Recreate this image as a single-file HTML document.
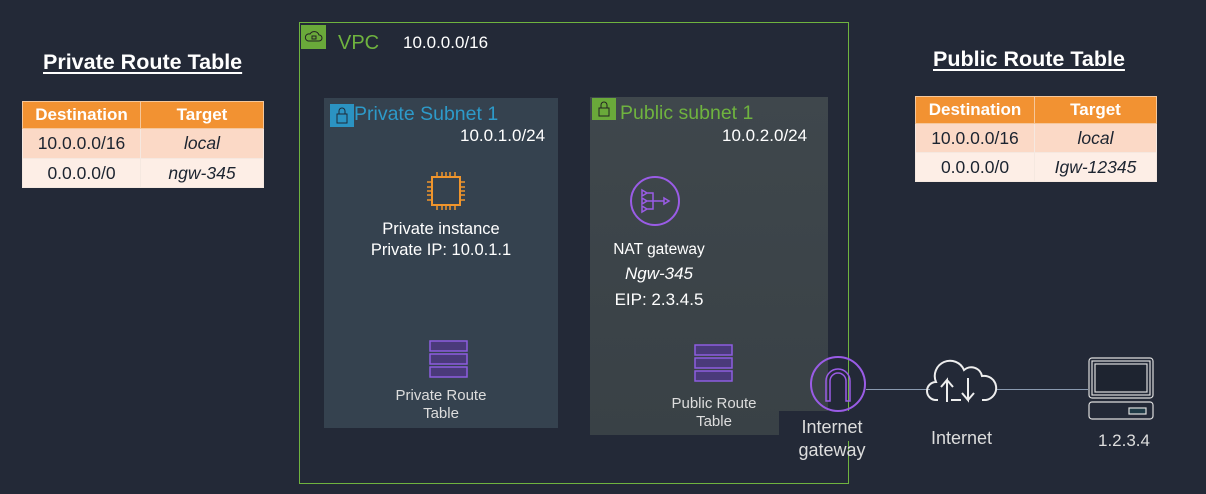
<!DOCTYPE html><html><head><style>
body{margin:0;width:1206px;height:494px;background:#232937;font-family:"Liberation Sans",sans-serif;position:relative;overflow:hidden;color:#fff}
.a{position:absolute}
.t{white-space:nowrap}
table{border-collapse:collapse;position:absolute;font-size:17.5px;color:#1c2430}
td{border:1px solid #f5e8e0;text-align:center;padding:0}
th{background:#f29232;color:#fff;font-weight:bold;border:1px solid #f5c79b;font-size:17px}
.r1 td{background:#fbd9c6}.r2 td{background:#fdeee6}
i{font-style:italic}
.h{font-weight:bold;font-size:21.5px;text-decoration:underline;text-underline-offset:3px}
.c{text-align:center}
</style></head><body>
<div class="a t h" style="left:43px;top:50px">Private Route Table</div>
<div class="a t h" style="left:933px;top:47px">Public Route Table</div>
<table style="left:22px;top:101px;width:242px">
<tr style="height:27px"><th style="width:115px">Destination</th><th>Target</th></tr>
<tr class="r1" style="height:30px"><td>10.0.0.0/16</td><td><i>local</i></td></tr>
<tr class="r2" style="height:29px"><td>0.0.0.0/0</td><td><i>ngw-345</i></td></tr></table>
<table style="left:915px;top:96px;width:242px">
<tr style="height:27px"><th style="width:116px">Destination</th><th>Target</th></tr>
<tr class="r1" style="height:29px"><td>10.0.0.0/16</td><td><i>local</i></td></tr>
<tr class="r2" style="height:29px"><td>0.0.0.0/0</td><td><i>Igw-12345</i></td></tr></table>

<div class="a" style="left:299px;top:22px;width:548px;height:460px;border:1px solid #6fb33f"></div>
<div class="a" style="left:301px;top:25px;width:25px;height:24px;background:#6aa93a"><svg width="25" height="24"><path d="M7 16h11a3 3 0 0 0 0-6 5 5 0 0 0-9-1 3.5 3.5 0 0 0-2 7z" fill="none" stroke="#222" stroke-width="1"/><rect x="11" y="11" width="4" height="3" fill="none" stroke="#222"/></svg></div>
<div class="a t" style="left:338px;top:32px;font-size:20px;color:#6fb33f">VPC</div>
<div class="a t" style="left:403px;top:33px;font-size:17px">10.0.0.0/16</div>

<div class="a" style="left:324px;top:98px;width:234px;height:330px;background:#35424f"></div>
<div class="a" style="left:330px;top:104px;width:24px;height:23px;background:#2b93c2"><svg width="24" height="23"><rect x="7" y="10" width="10" height="9" fill="none" stroke="#1d2a38"/><path d="M9 10V7a3 3 0 0 1 6 0v3" fill="none" stroke="#1d2a38"/></svg></div>
<div class="a t" style="left:354px;top:103px;font-size:19.5px;color:#2d9ac9">Private Subnet 1</div>
<div class="a t" style="left:460px;top:126px;font-size:17px">10.0.1.0/24</div>
<svg class="a" style="left:425px;top:170px" width="42" height="42"><rect x="7" y="7" width="28" height="28" fill="none" stroke="#f0952c" stroke-width="2"/><path d="M12 2v5M17 2v5M21 2v5M25 2v5M30 2v5M12 35v5M17 35v5M21 35v5M25 35v5M30 35v5M2 12h5M2 17h5M2 21h5M2 25h5M2 30h5M35 12h5M35 17h5M35 21h5M35 25h5M35 30h5" stroke="#f0952c" stroke-width="1.5"/></svg>
<div class="a t c" style="left:341px;top:219px;width:200px;font-size:16.5px;line-height:21px">Private instance<br>Private IP: 10.0.1.1</div>
<svg class="a" style="left:429px;top:340px" width="40" height="40"><g fill="#4a3a7a" stroke="#8d5ce0" stroke-width="1.5"><rect x="1" y="1" width="37" height="10"/><rect x="1" y="14" width="37" height="10"/><rect x="1" y="27" width="37" height="10"/></g></svg>
<div class="a t c" style="left:341px;top:387px;width:200px;font-size:15px;line-height:18px;color:#ddd">Private Route<br>Table</div>

<div class="a" style="left:590px;top:97px;width:238px;height:338px;background:linear-gradient(#3f474c,#394146)"></div>
<div class="a" style="left:779px;top:411px;width:70px;height:30px;background:#232937"></div>
<div class="a" style="left:592px;top:98px;width:24px;height:22px;background:#6aa93a"><svg width="24" height="22"><rect x="7" y="10" width="10" height="8" fill="none" stroke="#222"/><path d="M9 10V7a3 3 0 0 1 6 0v3" fill="none" stroke="#222"/></svg></div>
<div class="a t" style="left:620px;top:102px;font-size:19.5px;color:#6fb33f">Public subnet 1</div>
<div class="a t" style="left:722px;top:126px;font-size:17px">10.0.2.0/24</div>
<svg class="a" style="left:630px;top:176px" width="50" height="50"><circle cx="25" cy="25" r="24" fill="none" stroke="#9a5ce6" stroke-width="2"/><path d="M12 14l5 3-5 3zM12 22l5 3-5 3zM12 30l5 3-5 3zM17 17h6v16h-6M17 25h17M34 22l5 3-5 3z" fill="none" stroke="#9a5ce6" stroke-width="1.5"/></svg>
<div class="a t c" style="left:579px;top:241px;width:160px;font-size:15.5px">NAT gateway</div>
<div class="a t c" style="left:579px;top:264px;width:160px;font-size:17px"><i>Ngw-345</i></div>
<div class="a t c" style="left:579px;top:290px;width:160px;font-size:17px">EIP: 2.3.4.5</div>
<svg class="a" style="left:694px;top:344px" width="40" height="40"><g fill="#4a3a7a" stroke="#8d5ce0" stroke-width="1.5"><rect x="1" y="1" width="37" height="10"/><rect x="1" y="14" width="37" height="10"/><rect x="1" y="27" width="37" height="10"/></g></svg>
<div class="a t c" style="left:634px;top:395px;width:160px;font-size:15px;line-height:18px;color:#ddd">Public Route<br>Table</div>

<div class="a" style="left:866px;top:389px;width:64px;height:1px;background:#8a9ab0"></div>
<div class="a" style="left:996px;top:389px;width:92px;height:1px;background:#8a9ab0"></div>
<svg class="a" style="left:808px;top:355px" width="60" height="60"><circle cx="30" cy="29" r="27" fill="none" stroke="#9a5ce6" stroke-width="2"/><path d="M18 46V26a12 12 0 0 1 24 0v20h-4V26a8 8 0 0 0-16 0v20z" fill="none" stroke="#9a5ce6" stroke-width="1.5"/></svg>
<div class="a t c" style="left:782px;top:416px;width:100px;font-size:18px;line-height:23px;color:#ddd">Internet<br>gateway</div>
<svg class="a" style="left:925px;top:358px" width="74" height="50"><path d="M13 42h-2a9 9 0 0 1 0-18 15 15 0 0 1 28-12 11 11 0 0 1 18 6 11 11 0 0 1 4 24h-4M26 42h10" fill="none" stroke="#eee" stroke-width="2"/><path d="M22 44V22l-6 7M22 22l6 7M43 20v22l-6-7M43 42l6-7" fill="none" stroke="#eee" stroke-width="2"/></svg>
<div class="a t" style="left:931px;top:428px;font-size:18px;color:#ddd">Internet</div>
<svg class="a" style="left:1088px;top:357px" width="68" height="65"><g fill="none" stroke="#ddd" stroke-width="1.2"><rect x="1" y="1" width="64" height="40" rx="3"/><rect x="4" y="4" width="58" height="34"/><rect x="7" y="7" width="52" height="28" fill="#1e2430"/><rect x="1" y="45" width="64" height="17" rx="3"/><rect x="41" y="51" width="17" height="6" fill="#1e3a46"/></g></svg>
<div class="a t" style="left:1098px;top:431px;font-size:17px;color:#ddd">1.2.3.4</div>
</body></html>
